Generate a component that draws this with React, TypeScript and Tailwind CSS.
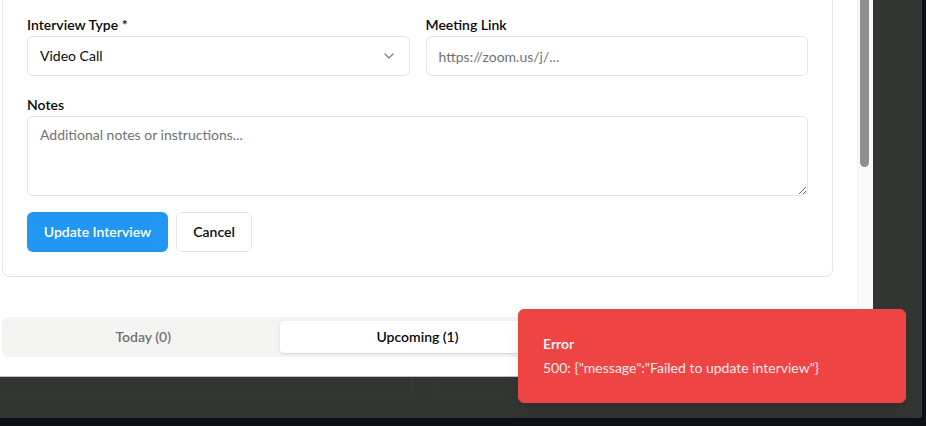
import React from 'react';
import { ChevronDown } from 'lucide-react';

const Field = ({ label, children }: { label: string; children: React.ReactNode }) => (
  <div className="flex flex-col">
    <label className="text-sm font-semibold leading-none text-[#0a0a0a]">{label}</label>
    <div className="mt-1">{children}</div>
  </div>
);

export default function App() {
  const [type] = React.useState('Video Call');
  const tabs = [
    { label: 'Today (0)', active: false },
    { label: 'Upcoming (1)', active: true },
    { label: 'Past (0)', active: false },
  ];

  return (
    <div className="relative h-[426px] w-[926px] overflow-hidden bg-[#0f1017] font-[Lato,sans-serif] text-[#0a0a0a]">
      {/* Overlay + dialog */}
      <div className="flex h-[418px] w-[922px] flex-col rounded-br-[3px] bg-[#333533]">
        <div className="flex h-[377px] w-[873px] border-b border-[#bdbdbd] bg-white">
          <div className="flex-1 pl-[2px]">
            {/* Edit form card (scrolled) */}
            <div className="w-[831px] rounded-b-lg border-x border-b border-[#e5e5e5] px-6 pb-6 pt-[18px]">
              <div className="grid grid-cols-2 gap-4">
                <Field label="Interview Type *">
                  <div className="flex h-10 items-center justify-between rounded-md border border-[#e5e5e5] bg-white px-3 text-sm">
                    <span>{type}</span>
                    <ChevronDown className="h-4 w-4 opacity-50" />
                  </div>
                </Field>
                <Field label="Meeting Link">
                  <input
                    type="text"
                    placeholder="https://zoom.us/j/..."
                    className="h-10 w-full rounded-md border border-[#e5e5e5] bg-white px-3 text-sm outline-none placeholder:text-[#737373]"
                  />
                </Field>
              </div>

              <div className="mt-[22px]">
                <Field label="Notes">
                  <textarea
                    placeholder="Additional notes or instructions..."
                    className="block h-20 w-full rounded-md border border-[#e5e5e5] bg-white px-3 py-2 text-sm outline-none placeholder:text-[#737373]"
                  />
                </Field>
              </div>

              <div className="mt-4 flex gap-2">
                <button className="h-10 w-[141px] rounded-md bg-[#2196f3] text-sm font-semibold text-white">
                  Update Interview
                </button>
                <button className="h-10 w-[76px] rounded-md border border-[#e5e5e5] bg-white text-sm font-semibold text-[#0a0a0a]">
                  Cancel
                </button>
              </div>
            </div>

            {/* Tabs */}
            <div className="mt-10 grid h-10 w-[831px] grid-cols-3 rounded-md bg-[#f4f4f3] p-1">
              {tabs.map((t) => (
                <button
                  key={t.label}
                  className={`rounded-sm text-sm font-semibold ${
                    t.active ? 'bg-white text-[#0a0a0a] shadow-sm' : 'text-[#737373]'
                  }`}
                >
                  {t.label}
                </button>
              ))}
            </div>
          </div>

          {/* Scrollbar */}
          <div className="w-4 border-l border-[#f1f1f1] bg-[#fafafa]">
            <div className="ml-[2px] h-[167px] w-[9px] rounded-b-full bg-[#8f8f8f]" />
          </div>
        </div>

        {/* Faint page content under the overlay */}
        <div className="flex h-[19px] w-[873px] gap-[24px]">
          <div className="w-[413px] rounded-br-md border-b border-r border-[#373937]" />
          <div className="flex-1 rounded-bl-md border-b border-l border-[#373937]" />
        </div>
      </div>

      {/* Toast */}
      <div className="absolute bottom-[23px] right-[20px] w-[388px] rounded-md border border-[#ef4444] bg-[#ef4444] p-6 pr-8 text-white shadow-lg">
        <div className="grid gap-1">
          <div className="text-sm font-semibold">Error</div>
          <div className="text-sm opacity-90">500: {'{"message":"Failed to update interview"}'}</div>
        </div>
      </div>
    </div>
  );
}
